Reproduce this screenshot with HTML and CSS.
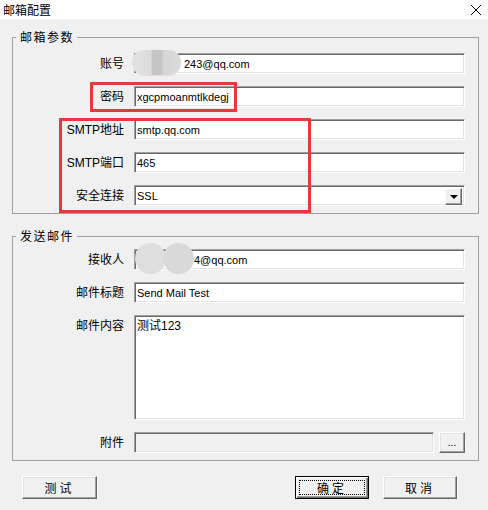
FILE: index.html
```html
<!DOCTYPE html>
<html lang="zh-CN">
<head>
  <meta charset="UTF-8" />
  <title>邮箱配置</title>
  <link rel="stylesheet" href="styles.css">
</head>
<body>

  <div class="titlebar">
    <span class="title">邮箱配置</span>
    <svg class="close" width="12" height="12" viewBox="0 0 12 12">
      <path d="M1 1 L11 11 M11 1 L1 11" stroke="#000" stroke-width="1" fill="none" />
    </svg>
  </div>

  <div class="dialog">
    <fieldset class="group group-account">
      <legend>邮箱参数</legend>
      <div class="form">
        <label>账号</label>
        <div class="field"><span class="blur blur-bar"></span><span class="text hidden-prefix">243@qq.com</span></div>

        <label>密码</label>
        <div class="field"><span class="text">xgcpmoanmtlkdegj</span></div>

        <label>SMTP地址</label>
        <div class="field"><span class="text">smtp.qq.com</span></div>

        <label>SMTP端口</label>
        <div class="field"><span class="text">465</span></div>

        <label>安全连接</label>
        <div class="field select">
          <span class="text">SSL</span>
          <span class="drop"><span class="arrow"></span></span>
        </div>
      </div>
    </fieldset>

    <fieldset class="group group-mail">
      <legend>发送邮件</legend>
      <div class="form form-mail">
        <label>接收人</label>
        <div class="field"><span class="blur blur-dots"><i></i><i></i></span><span class="text hidden-prefix2">4@qq.com</span></div>

        <label>邮件标题</label>
        <div class="field"><span class="text">Send Mail Test</span></div>

        <label class="top">邮件内容</label>
        <div class="field area"><span class="text">测试123</span></div>

        <label>附件</label>
        <div class="attach">
          <div class="field disabled"></div>
          <button class="btn btn-browse">...</button>
        </div>
      </div>
    </fieldset>

    <div class="actions">
      <button class="btn btn-test">测试</button>
      <button class="btn btn-ok"><span class="focus">确定</span></button>
      <button class="btn btn-cancel">取消</button>
    </div>
  </div>

  <div class="mark mark-pwd"></div>
  <div class="mark mark-smtp"></div>

</body>
</html>
```

FILE: styles.css
```css
:root {
  --face: #f0f0f0;
  --shadow: #a0a0a0;
  --dark: #696969;
  --light: #e3e3e3;
  --mark: #e5393c;
}

* {
  box-sizing: border-box;
}

body {
  margin: 0;
  width: 488px;
  height: 510px;
  overflow: hidden;
  position: relative;
  background: var(--face);
  color: #000;
  font-family: 'Liberation Sans', 'Noto Sans CJK SC', sans-serif;
  font-size: 12px;
}

.titlebar {
  height: 19px;
  background: #fff;
  display: flex;
  align-items: center;
  justify-content: space-between;
  padding: 0 6px 0 3px;
}

.title {
  font-family: 'Noto Sans CJK SC', sans-serif;
  font-size: 12px;
  line-height: 14px;
}

.dialog {
  padding: 10px 9px 0 12px;
}

.group {
  margin: 0;
  padding: 8px 0 7px 0;
  width: 467px;
  border: 1px solid var(--shadow);
}

.group legend {
  margin-left: 3px;
  padding: 0 3px 0 4px;
  font-family: 'Noto Sans CJK SC', sans-serif;
  font-size: 12px;
  line-height: 16px;
  letter-spacing: 1.5px;
}

.group-mail {
  margin-top: 14px;
  padding-top: 5px;
  padding-bottom: 7px;
}

.form {
  display: grid;
  grid-template-columns: 111px 331px;
  grid-auto-rows: 21px;
  column-gap: 10px;
  row-gap: 12px;
  align-items: center;
}

.form-mail {
  grid-template-rows: 21px 21px 105px 21px;
}

.form label {
  text-align: right;
  font-family: 'Liberation Sans', 'Noto Sans CJK SC', sans-serif;
  font-size: 12px;
  line-height: 14px;
}

.form label.top {
  align-self: start;
  padding-top: 4px;
}

.field {
  position: relative;
  height: 21px;
  background: #fff;
  border: 1px solid;
  border-color: var(--shadow) #fff #fff var(--shadow);
  box-shadow: inset 1px 1px 0 var(--dark), inset -1px -1px 0 var(--light);
  padding: 3px 3px 0 2px;
  font-size: 11px;
  line-height: 14px;
  white-space: nowrap;
}

.field.area {
  height: 105px;
  font-size: 12px;
}

.field.disabled {
  background: var(--face);
  flex: 1;
}

.hidden-prefix {
  padding-left: 47px;
}

.hidden-prefix2 {
  padding-left: 57px;
}

.blur {
  position: absolute;
}

.blur-bar {
  left: -3px;
  top: -4px;
  width: 49px;
  height: 25px;
  border-radius: 12px;
  background: linear-gradient(90deg, #e2e2e2 0%, #dcdcdc 38%, #c5c5c5 42%, #c5c5c5 60%, #d5d5d5 64%, #dadada 100%);
  box-shadow: 0 2px 1px -1px #f2d6d6;
}

.blur-dots {
  left: 0;
  top: -7px;
  width: 60px;
  height: 30px;
}

.blur-dots i {
  position: absolute;
  top: 0;
  width: 31px;
  height: 31px;
  border-radius: 50%;
  background: #dadada;
}

.blur-dots i:first-child {
  left: 0;
  background: #dedede;
}

.blur-dots i:last-child {
  left: 28px;
  background: #d9d9d9;
}

.select .drop {
  position: absolute;
  right: 2px;
  top: 2px;
  width: 17px;
  height: 17px;
  background: var(--face);
  border: 1px solid;
  border-color: #fff var(--dark) var(--dark) #fff;
  box-shadow: inset -1px -1px 0 var(--shadow);
  display: flex;
  align-items: center;
  justify-content: center;
}

.arrow {
  width: 0;
  height: 0;
  border-left: 4px solid transparent;
  border-right: 4px solid transparent;
  border-top: 4px solid #000;
  margin-top: 1px;
}

.attach {
  display: flex;
  gap: 5px;
  height: 21px;
}

.btn {
  background: var(--face);
  border: 1px solid;
  border-color: #fff var(--dark) var(--dark) #fff;
  box-shadow: inset -1px -1px 0 var(--shadow), inset 1px 1px 0 var(--light);
  font-family: 'Noto Sans CJK SC', sans-serif;
  font-size: 12px;
  color: #000;
  padding: 0;
  height: 23px;
  letter-spacing: 3px;
}

.btn-browse {
  width: 26px;
  height: 21px;
  letter-spacing: 0;
  font-family: 'Liberation Sans', sans-serif;
  font-size: 10px;
  line-height: 10px;
}

.actions {
  display: flex;
  margin-top: 15px;
  padding-left: 10px;
}

.btn-test {
  width: 75px;
}

.btn-ok {
  width: 74px;
  margin-left: auto;
  border: 1px solid #000;
  box-shadow: inset 1px 1px 0 #fff, inset -1px -1px 0 var(--dark), inset -2px -2px 0 var(--shadow);
  padding: 3px;
}

.btn-ok .focus {
  display: block;
  height: 100%;
  border: 1px dotted #000;
  line-height: 13px;
}

.btn-cancel {
  width: 74px;
  margin-left: 14px;
  margin-right: 22px;
}

.mark {
  position: absolute;
  border: 3px solid var(--mark);
}

.mark-pwd {
  left: 90px;
  top: 82px;
  width: 147px;
  height: 30px;
}

.mark-smtp {
  left: 59px;
  top: 118px;
  width: 252px;
  height: 95px;
}
```
